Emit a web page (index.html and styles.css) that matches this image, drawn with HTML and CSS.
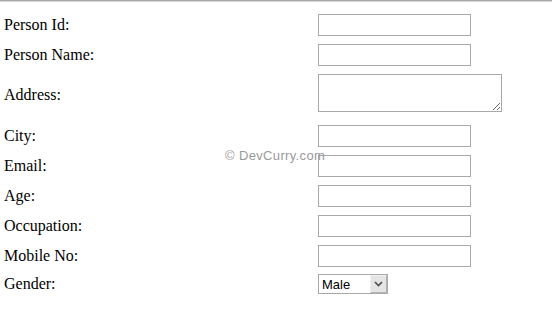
FILE: index.html
```html
<!DOCTYPE html>
<html lang="en">

<head>
    <meta charset="UTF-8">
    <meta name="viewport" content="width=device-width, initial-scale=1.0">
    <title>Person Details</title>
    <link rel="stylesheet" href="styles.css">
</head>

<body>
    <div class="topline"></div>
    <form class="person-form">
        <label for="pid">Person Id:</label>
        <div class="field"><input type="text" id="pid" /></div>

        <label for="pname">Person Name:</label>
        <div class="field"><input type="text" id="pname" /></div>

        <label for="addr" class="tall">Address:</label>
        <div class="field tall"><textarea id="addr"></textarea></div>

        <label for="city">City:</label>
        <div class="field"><input type="text" id="city" /></div>

        <label for="email">Email:</label>
        <div class="field"><input type="text" id="email" /></div>

        <label for="age">Age:</label>
        <div class="field"><input type="text" id="age" /></div>

        <label for="occ">Occupation:</label>
        <div class="field"><input type="text" id="occ" /></div>

        <label for="mobile">Mobile No:</label>
        <div class="field"><input type="text" id="mobile" /></div>

        <label for="gender" class="sel">Gender:</label>
        <div class="field sel">
            <div class="select-box">
                <select id="gender">
                    <option>Male</option>
                    <option>Female</option>
                </select>
                <span class="select-btn">
                    <svg width="9" height="6" viewBox="0 0 9 6">
                        <path d="M1 1 L4.5 4.5 L8 1" fill="none" stroke="#4d4d4d" stroke-width="1.6" />
                    </svg>
                </span>
            </div>
        </div>
    </form>
    <div class="watermark">&copy; DevCurry.com</div>
</body>

</html>
```

FILE: styles.css
```css
body {
    margin: 0;
    background: #ffffff;
    font-family: "Liberation Serif", "Times New Roman", serif;
    font-size: 16px;
    color: #000000;
}

.topline {
    height: 1px;
    background-color: #a8a8a8;
    border-bottom: 1px solid #d4d4d4;
}

.person-form {
    display: grid;
    grid-template-columns: 314px auto;
    row-gap: 8px;
    padding: 12px 0 0 4px;
}

.person-form label {
    display: flex;
    align-items: center;
    height: 22px;
}

.field {
    display: flex;
    align-items: center;
    height: 22px;
}

.person-form label.tall,
.field.tall {
    height: 38px;
    margin-bottom: 5px;
}

.person-form label.tall {
    box-sizing: border-box;
    padding-top: 3px;
}

.person-form label.sel,
.field.sel {
    height: 20px;
    margin-top: -1px;
}

input[type="text"] {
    box-sizing: border-box;
    width: 153px;
    height: 22px;
    margin: 0;
    border: 1px solid #a9a9a9;
    padding: 1px 3px;
    font-family: "Liberation Sans", Arial, sans-serif;
    font-size: 13px;
}

textarea {
    box-sizing: border-box;
    width: 184px;
    height: 38px;
    margin: 0;
    border: 1px solid #a9a9a9;
    padding: 2px;
    font-family: "Liberation Mono", monospace;
    font-size: 13px;
}

.select-box {
    display: flex;
    box-sizing: border-box;
    width: 70px;
    height: 20px;
    border: 1px solid #a9a9a9;
    background: #ffffff;
}

.select-box select {
    appearance: none;
    -webkit-appearance: none;
    flex: 1;
    min-width: 0;
    border: none;
    outline: none;
    margin: 0;
    padding: 0 0 0 3px;
    background: transparent;
    font-family: "Liberation Sans", Arial, sans-serif;
    font-size: 13px;
    color: #000000;
}

.select-btn {
    display: flex;
    align-items: center;
    justify-content: center;
    box-sizing: border-box;
    width: 17px;
    background-color: #e4e4e4;
    border: 1px solid #b4b4b4;
    border-top-color: #f2f2f2;
    border-left-color: #f2f2f2;
}

.watermark {
    position: absolute;
    left: 225px;
    top: 148px;
    font-family: "Liberation Sans", Arial, sans-serif;
    font-size: 13px;
    color: #9a9a9a;
    letter-spacing: 0.35px;
}
```
